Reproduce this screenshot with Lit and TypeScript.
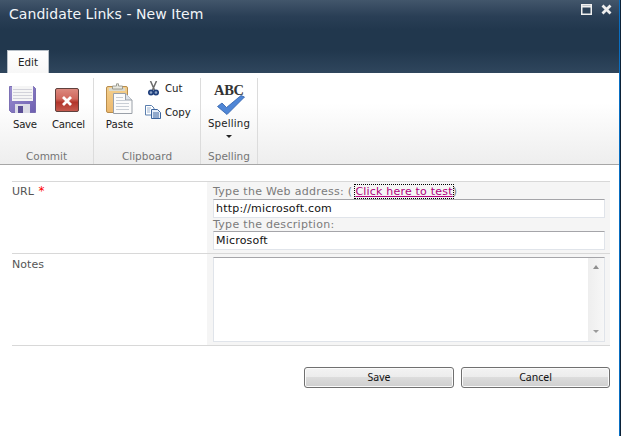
import { LitElement, html, css, svg } from "lit";
import { customElement } from "lit/decorators.js";

@customElement("app-root")
export class AppRoot extends LitElement {
  static styles = css`
    :host { display: block; width: 623px; height: 436px; background: #fff; overflow: hidden; font-family: "DejaVu Sans", Verdana, sans-serif; font-size: 11px; color: #444; }
    .frame { width: 619px; height: 436px; border-right: 1px solid #0a6fc2; box-shadow: 1px 0 0 #0c2238; display: flex; flex-direction: column; box-sizing: content-box; }
    .header { height: 73px; flex: none; background: linear-gradient(#42566b 0, #2a3f56 16px, #21374d 30px, #21374d 50px, #2f465d 73px); position: relative; box-sizing: border-box; padding: 6px 0 0 9px; display: flex; flex-direction: column; }
    .title { color: #f2f5f8; font-size: 14px; line-height: 17px; letter-spacing: 0.06px; }
    .win { position: absolute; top: 4px; right: 0; display: flex; gap: 9px; padding-right: 7px; }
    .tab { margin: 27px 0 0 -2px; width: 42px; height: 23px; background: linear-gradient(#fff, #f7f7f7); border: 1px solid #b8c0c8; border-bottom: 0; box-sizing: border-box; color: #222; font-size: 10.3px; line-height: 23px; text-align: center; }
    .ribbon { height: 92px; flex: none; box-sizing: border-box; border-bottom: 1px solid #a6a6a6; background: linear-gradient(#fff 0, #fff 30px, #eeeeee 90px); display: flex; padding-top: 5px; color: #222; font-size: 10.2px; }
    .group { display: flex; flex-direction: column; border-right: 1px solid #dcdcdc; box-sizing: border-box; height: 86px; }
    .g1 { width: 94px; } .g2 { width: 107px; } .g3 { width: 57px; }
    .btns { flex: 1; display: flex; }
    .g1 .btns { padding: 8px 0 0 9px; gap: 18px; }
    .g2 .btns { padding: 5px 0 0 12px; gap: 12px; }
    .g3 .btns { justify-content: center; padding-top: 4px; }
    .glabel { text-align: center; color: #757575; font-size: 10.5px; line-height: 14px; padding-bottom: 1px; }
    .big { display: flex; flex-direction: column; align-items: center; position: relative; }
    .big svg { display: block; }
    .big span { line-height: 14px; margin-top: 4px; }
    .big span.save-label { margin: 5px 0 0 4px; letter-spacing: -0.3px; }
    .cancel-btn { padding-top: 2px; width: 24px; }
    .big.cancel-btn span { white-space: nowrap; margin: 6px 0 0 3px; letter-spacing: -0.3px; }
    .paste-btn { width: 27px; }
    .small { display: flex; align-items: center; height: 18px; }
    .cut { padding-left: 3px; margin-top: -4px; margin-bottom: 6px; gap: 6px; }
    .copy { gap: 4px; }
    .form { flex: 1; padding: 16px 9px 0 12px; min-height: 0; }
    .row { display: grid; grid-template-columns: 195px 1fr; border-top: 1px solid #d8d8d8; box-sizing: border-box; }
    .row.last { border-bottom: 1px solid #d8d8d8; }
    .lab { padding-top: 3px; line-height: 14px; color: #555; letter-spacing: 0.05px; }
    .row.last .lab { padding-top: 4px; }
    .req { color: #f00; font-size: 12px; margin-left: 1px; line-height: 10px; }
    .val { background: #f5f5f5; padding: 3px 5px 3px 6px; color: #7b7b7b; line-height: 14px; display: flex; flex-direction: column; letter-spacing: 0.3px; }
    .hint2 { line-height: 13px; }
    .r1 { height: 72px; }
    .link { color: #b0007c; text-decoration: underline; outline: 1px dotted #000; letter-spacing: 0.2px; margin-left: 3px; }
    .inp { height: 19px; box-sizing: border-box; background: #fff; border: 1px solid #e0e4ea; border-top: 1px solid #a5a5a9; color: #111; padding-left: 2px; line-height: 17px; letter-spacing: 0.2px; }
    .r2 { height: 93px; }
    .ta { height: 85px; box-sizing: border-box; background: #fff; border: 1px solid #e0e4ea; border-top: 1px solid #a5a5a9; display: flex; justify-content: flex-end; }
    .sb { width: 16px; background: linear-gradient(90deg, #eeeeee, #f7f7f7); display: flex; flex-direction: column; justify-content: space-between; align-items: center; padding: 7px 0 8px; box-sizing: border-box; }
    .up { width: 0; height: 0; border: 3.5px solid transparent; border-top: 0; border-bottom: 4px solid #8f8f8f; }
    .down { width: 0; height: 0; border: 3.5px solid transparent; border-bottom: 0; border-top: 3px solid #9a9a9a; }
    .actions { display: flex; justify-content: flex-end; gap: 7px; padding-top: 21px; }
    .btn { height: 21px; box-sizing: border-box; width: 150px; border: 1px solid #707070; border-radius: 3px; background: linear-gradient(#f3f3f3 0, #ececec 49%, #dcdcdc 50%, #cfcfcf 100%); box-shadow: inset 0 0 0 1px #fbfbfb; color: #111; font: 10.5px/19px "Noto Sans", sans-serif; text-align: center; }
    .btn.c { width: 149px; }
    .caret { width: 0; height: 0; border: 3px solid transparent; border-bottom: 0; border-top: 3px solid #222; margin-top: 4px; }
    .spell-ico { position: relative; width: 34px; height: 33px; }
    .big span.abc { font: bold 14.5px "Liberation Serif", serif; color: #333; line-height: 12px; letter-spacing: -0.3px; position: absolute; top: 2px; left: 2px; margin: 0; }
    .big span.spell-label { margin-top: 2px; letter-spacing: 0.2px; }
    .spell-ico svg { position: absolute; left: 5px; top: 13px; }
  `;

  saveIcon() {
    return html`<svg width="27" height="27" viewBox="0 0 27 27">
      <defs><linearGradient id="sg" x1="0" y1="0" x2="1" y2="1"><stop offset="0" stop-color="#9a8ed0"/><stop offset="1" stop-color="#6d5fb0"/></linearGradient></defs>
      <path d="M.5.5h24l2 2v24h-24l-2-2z" fill="url(#sg)" stroke="#6a5ca8" stroke-width=".8"/>
      <rect x="3" y="0" width="21" height="15" fill="#f5f5f5"/>
      <path d="M4 3.500h19M4 6.500h19M4 9.500h19M4 12.500h19" stroke="#d2d2da"/>
      <rect x="6" y="18" width="15" height="9" fill="#dcdce6"/>
      <rect x="9" y="20" width="5" height="7" fill="#5b4f96"/>
    </svg>`;
  }
  cancelIcon() {
    return html`<svg width="24" height="24" viewBox="0 0 24 24">
      <defs><linearGradient id="cg" x1="0" y1="0" x2="0" y2="1"><stop offset="0" stop-color="#dc8a80"/><stop offset=".45" stop-color="#d0675c"/><stop offset=".6" stop-color="#b2352b"/><stop offset="1" stop-color="#c65c50"/></linearGradient></defs>
      <rect x=".5" y=".5" width="23" height="23" rx="1.500" fill="url(#cg)" stroke="#5f413d"/>
      <path d="M8 9l8 8M16 9l-8 8" stroke="#fff" stroke-width="2.800"/>
    </svg>`;
  }
  pasteIcon() {
    return html`<svg width="27" height="31" viewBox="0 0 27 31">
      <defs><linearGradient id="pg" x1="0" y1="0" x2="0" y2="1"><stop offset="0" stop-color="#f3d08e"/><stop offset="1" stop-color="#ecb76c"/></linearGradient></defs>
      <rect x=".5" y="3.500" width="21" height="26" rx="1.500" fill="url(#pg)" stroke="#b88d4e"/>
      <rect x="3" y="5" width="16" height="3" fill="#d9d9d0"/>
      <path d="M6.500 6V3h4V.8h2V3h4v3z" fill="#e8e8e0" stroke="#8c8c80" stroke-width=".8"/>
      <path d="M7.500 10.500h12l6.500 6.500v13.500H7.500z" fill="#fbfbfb" stroke="#9aa0a8"/>
      <path d="M19.500 10.500v6.500h6.500" fill="#dde2e8" stroke="#9aa0a8"/>
      <path d="M10 14.500h7M10 17.500h13M10 20.500h13M10 23.500h13M10 26.500h13" stroke="#c9ced5"/>
    </svg>`;
  }
  cutIcon() {
    return html`<svg width="11" height="15" viewBox="0 0 11 15">
      <path d="M2.500 0l4 9M8.500 0l-4 9" stroke="#6a6a6a" stroke-width="1.500" fill="none"/>
      <circle cx="3" cy="11.500" r="2.200" fill="#8fa6c8" stroke="#1f3f7c" stroke-width="1.700"/>
      <circle cx="8" cy="11.500" r="2.200" fill="#8fa6c8" stroke="#1f3f7c" stroke-width="1.700"/>
    </svg>`;
  }
  copyIcon() {
    return html`<svg width="16" height="14" viewBox="0 0 16 14">
      <path d="M.5.5h6l2.500 2.500v7H.5z" fill="#fff" stroke="#5b7fae"/>
      <path d="M6.500 4.500h6l3 3v6h-9z" fill="#e6eefa" stroke="#3d659e"/>
      <path d="M8 8h6M8 10h6M8 12h6" stroke="#3d659e"/>
      <path d="M2 3h4M2 5h3M2 7h3" stroke="#9db3d0"/>
    </svg>`;
  }
  checkIcon() {
    return svg`<path d="M.5 11.500L5 8l4.500 4.500L24 .5 27.500 2 10 19.500z" fill="#4f86d6" stroke="#2d5ea8" stroke-width=".8"/>`;
  }

  render() {
    return html`
      <div class="frame">
        <div class="header">
          <div class="title">Candidate Links - New Item</div>
          <div class="win">
            <svg width="11" height="11" viewBox="0 0 11 11"><rect x=".75" y=".75" width="9.500" height="9.500" fill="#2c4157" stroke="#f0f0f0" stroke-width="1.500"/><path d="M1 2.500h9" stroke="#f0f0f0" stroke-width="2"/></svg>
            <svg width="11" height="11" viewBox="0 0 11 11"><path d="M1.500 1.500l8 8M9.500 1.500l-8 8" stroke="#eee" stroke-width="2.800"/></svg>
          </div>
          <div class="tab">Edit</div>
        </div>
        <div class="ribbon">
          <div class="group g1">
            <div class="btns">
              <div class="big">${this.saveIcon()}<span class="save-label">Save</span></div>
              <div class="big cancel-btn">${this.cancelIcon()}<span>Cancel</span></div>
            </div>
            <div class="glabel">Commit</div>
          </div>
          <div class="group g2">
            <div class="btns">
              <div class="big paste-btn">${this.pasteIcon()}<span>Paste</span></div>
              <div>
                <div class="small cut">${this.cutIcon()}<span>Cut</span></div>
                <div class="small copy">${this.copyIcon()}<span>Copy</span></div>
              </div>
            </div>
            <div class="glabel">Clipboard</div>
          </div>
          <div class="group g3">
            <div class="btns">
              <div class="big">
                <div class="spell-ico"><span class="abc">ABC</span><svg width="28" height="21" viewBox="0 0 28 21">${this.checkIcon()}</svg></div>
                <span class="spell-label">Spelling</span>
                <div class="caret"></div>
              </div>
            </div>
            <div class="glabel">Spelling</div>
          </div>
        </div>
        <div class="form">
          <div class="row r1">
            <div class="lab">URL <span class="req">*</span></div>
            <div class="val">
              <div>Type the Web address: (<span class="link">Click here to test</span>)</div>
              <div class="inp">http://microsoft.com</div>
              <div class="hint2">Type the description:</div>
              <div class="inp">Microsoft</div>
            </div>
          </div>
          <div class="row r2 last">
            <div class="lab">Notes</div>
            <div class="val"><div class="ta"><div class="sb"><div class="up"></div><div class="down"></div></div></div></div>
          </div>
          <div class="actions">
            <div class="btn">Save</div>
            <div class="btn c">Cancel</div>
          </div>
        </div>
      </div>
    `;
  }
}
